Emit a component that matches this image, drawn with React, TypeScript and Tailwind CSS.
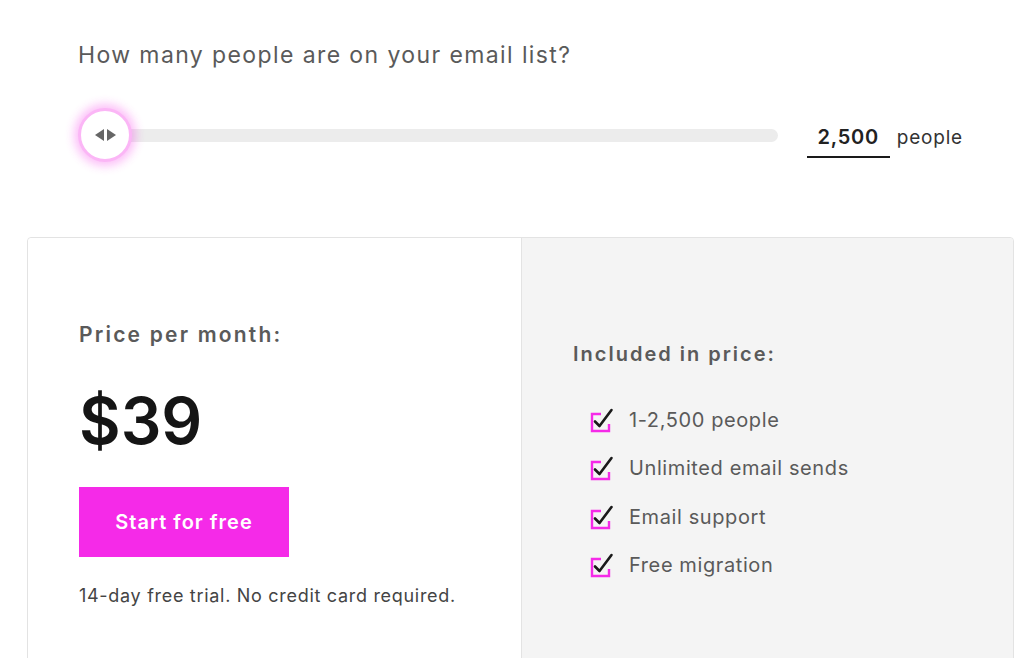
import React, { useState } from "react";

const features = [
  "1-2,500 people",
  "Unlimited email sends",
  "Email support",
  "Free migration",
];

const CheckIcon: React.FC = () => (
  <svg width="26" height="26" viewBox="0 0 26 26" fill="none">
    {/* pink box, open at the top right */}
    <path
      d="M12 7H3V24H20V17"
      stroke="#f52ae8"
      strokeWidth="2.4"
      fill="none"
    />
    {/* check mark */}
    <path
      d="M6 14.5L10.5 19L22.5 3"
      stroke="#1a1a1a"
      strokeWidth="2.6"
      strokeLinecap="round"
      strokeLinejoin="round"
      fill="none"
    />
  </svg>
);

const App: React.FC = () => {
  const [people] = useState("2,500");

  return (
    <div
      className="min-h-screen bg-white text-[#555] overflow-hidden"
      style={{ fontFamily: "Inter, 'Open Sans', sans-serif" }}
    >
      {/* Question + slider */}
      <div className="pl-[78px] pr-[57px] pt-[38px]">
        <h1 className="text-[23px] leading-[34px] text-[#5a5a5a] tracking-[1.4px]">
          How many people are on your email list?
        </h1>

        <div className="flex items-center mt-[36px] h-[54px]">
          <div className="relative flex-1 mr-[29px] h-[54px] flex items-center">
            <div className="h-[13px] flex-1 ml-[27px] rounded-full bg-[#ececec]" />
            {/* thumb */}
            <div className="absolute left-0 top-0 w-[54px] h-[54px] rounded-full bg-white border-[3px] border-[#fbb6f6] shadow-[0_0_10px_4px_rgba(245,42,232,0.3)] flex items-center justify-center gap-[3px]">
              <span className="w-0 h-0 border-y-[6px] border-y-transparent border-r-[9px] border-r-[#666]" />
              <span className="w-0 h-0 border-y-[6px] border-y-transparent border-l-[9px] border-l-[#666]" />
            </div>
          </div>
          <div className="flex items-baseline mt-[4px]">
            <div className="w-[83px] border-b-2 border-[#1a1a1a] text-center text-[20px] font-semibold text-[#222] tracking-[0.8px] pb-[4px] pt-[6px]">
              {people}
            </div>
            <span className="ml-[7px] text-[19px] text-[#333] tracking-[0.8px]">people</span>
          </div>
        </div>
      </div>

      {/* Pricing card */}
      <div className="mt-[75px] ml-[27px] w-[987px] h-[460px] flex rounded-[4px] border border-[#e3e3e3]">
        <div className="w-[494px] border-r border-[#e3e3e3] pl-[51px] pt-[81px] bg-white rounded-l-[4px]">
          <div className="text-[21px] font-semibold text-[#5a5a5a] tracking-[2.2px]">
            Price per month:
          </div>
          <div className="mt-[35px] text-[64px] leading-[70px] font-semibold text-[#151515]">
            $39
          </div>
          <button className="mt-[31px] w-[210px] h-[70px] bg-[#f52ae8] text-white text-[20px] font-semibold tracking-[1px]">
            Start for free
          </button>
          <div className="mt-[25px] text-[18px] text-[#444] tracking-[0.7px]">
            14-day free trial. No credit card required.
          </div>
        </div>

        <div className="flex-1 bg-[#f4f4f4] pl-[51px] pt-[101px] rounded-r-[4px]">
          <div className="text-[20px] font-semibold text-[#5a5a5a] tracking-[2px]">
            Included in price:
          </div>
          <ul className="mt-[36px] flex flex-col gap-[19.5px] pl-[16px]">
            {features.map((f) => (
              <li key={f} className="flex items-center gap-[14px] h-[29px]">
                <CheckIcon />
                <span className="text-[20px] text-[#5a5a5a] tracking-[0.6px]">{f}</span>
              </li>
            ))}
          </ul>
        </div>
      </div>
    </div>
  );
};

export default App;
